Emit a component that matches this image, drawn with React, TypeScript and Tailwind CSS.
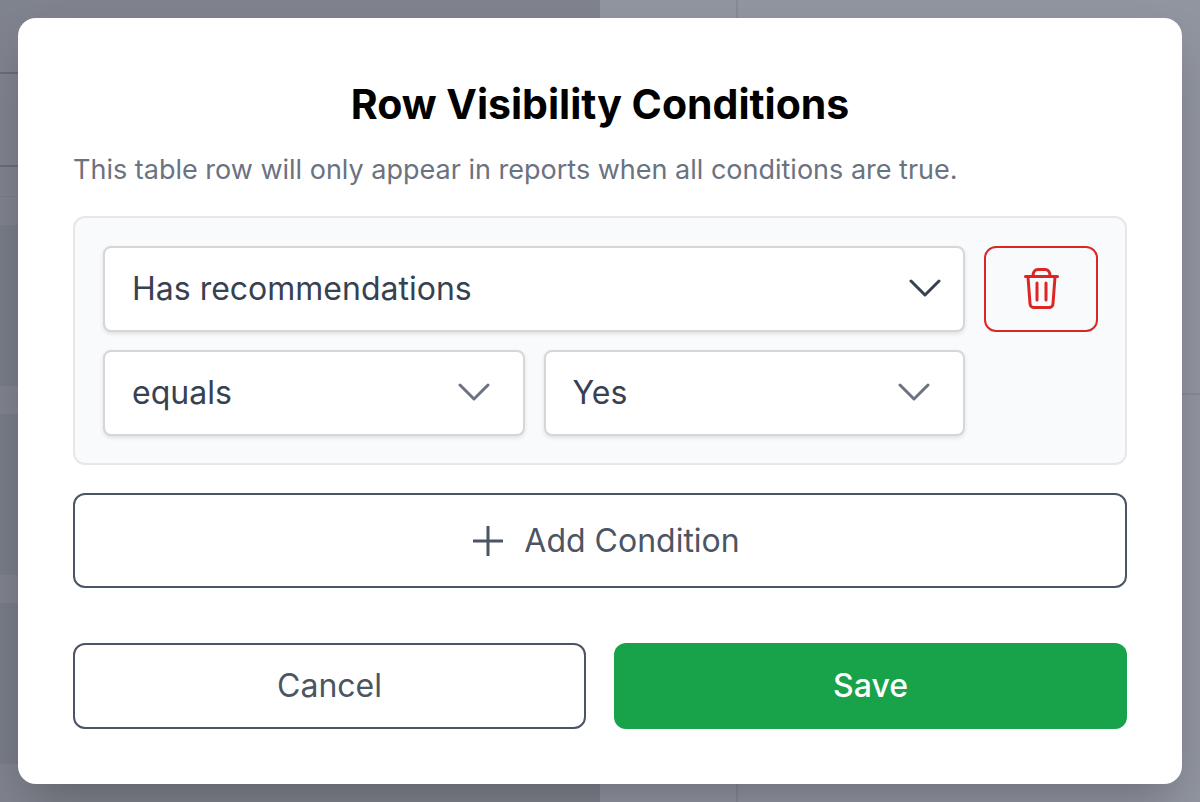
import React, { useState } from "react";

interface ConditionSelectProps {
  label: string;
  options: string[];
  value: string;
  onChange: (value: string) => void;
  iconClass: string;
}

const ConditionSelect: React.FC<ConditionSelectProps> = ({
  label,
  options,
  value,
  onChange,
  iconClass,
}) => {
  return (
    <div className="relative min-w-0 flex-1">
      <select
        aria-label={label}
        className="block h-[86px] w-full appearance-none rounded-lg border-2 border-[#d6d6d8] bg-white pr-20 pl-[27px] text-[32px] text-[#374151] shadow-[0_2px_4px_rgba(0,0,0,0.1)]"
        value={value}
        onChange={(e) => onChange(e.target.value)}
      >
        {options.map((option) => (
          <option key={option}>{option}</option>
        ))}
      </select>
      <svg
        className={`pointer-events-none absolute inset-y-0 my-auto h-5 w-8 ${iconClass}`}
        viewBox="0 0 32 20"
        fill="none"
        stroke="currentColor"
        strokeWidth="3"
        strokeLinecap="round"
        strokeLinejoin="round"
      >
        <path d="M2 2 16 16 30 2" />
      </svg>
    </div>
  );
};

const TrashIcon: React.FC = () => (
  <svg
    className="h-11 w-9"
    viewBox="0 0 36 44"
    fill="none"
    stroke="currentColor"
    strokeWidth="3"
    strokeLinecap="round"
    strokeLinejoin="round"
  >
    <path d="M2.500 9.500h32M10 9c0-4 2-6.500 5-6.500h7c3 0 5 2.500 5 6.500" />
    <path d="M5 10l2 26.500a4 4 0 0 0 4 4h15a4 4 0 0 0 4-4L32 10" />
    <path d="M14 16v17M23 16v17" />
  </svg>
);

// Report editor that sits dimmed behind the dialog
const Backdrop: React.FC = () => (
  <div className="absolute inset-0 flex overflow-hidden bg-[#9195a0]" aria-hidden="true">
    <div className="w-1/2 bg-[#7f838d]">
      <div className="h-[74px] border-b-2 border-[#676c77]" />
      <div className="h-[93px] border-b-2 border-[#676c77]" />
      <div className="h-[30px] border-b border-[#787c87]" />
      <div className="mt-7 h-[161px] bg-[#787c87]" />
      <div className="mt-7 h-[161px] bg-[#787c87]" />
      <div className="mt-7 h-[161px] bg-[#787c87]" />
    </div>
    <div className="w-[138px] border-r-2 border-[#868a97]" />
    <div className="flex-1">
      <div className="h-[395px] border-b-2 border-[#868a97]" />
    </div>
  </div>
);

const App: React.FC = () => {
  const [field, setField] = useState("Has recommendations");
  const [operator, setOperator] = useState("equals");
  const [answer, setAnswer] = useState("Yes");

  return (
    <div className="relative min-h-screen font-['Inter',sans-serif]">
      <Backdrop />
      <div className="relative flex min-h-screen items-center justify-center p-[18px]">
        <div
          role="dialog"
          aria-labelledby="dialog-title"
          className="w-full rounded-[18px] bg-white p-[55px] shadow-[0_24px_48px_-10px_rgba(0,0,0,0.25)]"
        >
          <h2 id="dialog-title" className="text-center text-[41px] leading-[62px] font-bold text-black">
            Row Visibility Conditions
          </h2>
          <p className="mt-4 text-[27px] leading-[38px] text-[#6b7280]">
            This table row will only appear in reports when all conditions are true.
          </p>

          <div className="mt-[27px] flex gap-[19px] rounded-xl border-2 border-[#e5e7eb] bg-[#f9fafb] p-7 pr-[27px] pb-[27px]">
            <div className="flex min-w-0 flex-1 flex-col gap-[18px]">
              <ConditionSelect
                label="Question"
                options={["Has recommendations", "Has defects"]}
                value={field}
                onChange={setField}
                iconClass="right-6 text-[#374151]"
              />
              <div className="flex gap-[19px]">
                <ConditionSelect
                  label="Operator"
                  options={["equals", "does not equal"]}
                  value={operator}
                  onChange={setOperator}
                  iconClass="right-[35px] text-[#6b7280]"
                />
                <ConditionSelect
                  label="Answer"
                  options={["Yes", "No"]}
                  value={answer}
                  onChange={setAnswer}
                  iconClass="right-[35px] text-[#6b7280]"
                />
              </div>
            </div>
            <button
              type="button"
              aria-label="Delete condition"
              className="flex h-[86px] w-[114px] items-center justify-center rounded-xl border-2 border-[#dc2626] text-[#dc2626]"
            >
              <TrashIcon />
            </button>
          </div>

          <button
            type="button"
            className="mt-7 flex h-[95px] w-full items-center justify-center gap-5 rounded-xl border-2 border-[#4b5563] pl-3 text-[32px] text-[#4b5563]"
          >
            <svg className="size-8" viewBox="0 0 32 32" fill="none" stroke="currentColor" strokeWidth="3">
              <path d="M16 1v30M1 16h30" />
            </svg>
            Add Condition
          </button>

          <div className="mt-[55px] grid grid-cols-2 gap-7">
            <button
              type="button"
              className="h-[86px] rounded-xl border-2 border-[#4b5563] text-[32px] text-[#4b5563]"
            >
              Cancel
            </button>
            <button
              type="button"
              className="h-[86px] rounded-xl bg-[#18a34a] text-[32px] font-medium text-white"
            >
              Save
            </button>
          </div>
        </div>
      </div>
    </div>
  );
};

export default App;
